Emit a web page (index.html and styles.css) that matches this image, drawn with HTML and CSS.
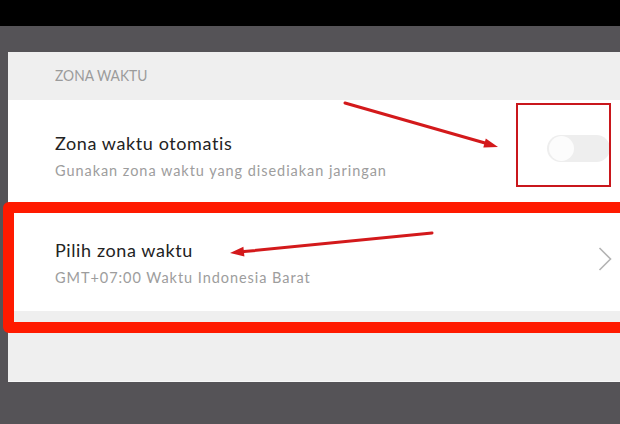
FILE: index.html
```html
<!DOCTYPE html>
<html lang="id">
<head>
<meta charset="utf-8">
<title>Zona waktu</title>
<link rel="stylesheet" href="styles.css">
</head>
<body>
<div class="topbar"></div>
<div class="stage">
  <div class="panel">
    <div class="section-head"><span>ZONA WAKTU</span></div>
    <div class="row row-auto">
      <div class="texts">
        <div class="title">Zona waktu otomatis</div>
        <div class="sub">Gunakan zona waktu yang disediakan jaringan</div>
      </div>
      <div class="toggle"><div class="knob"></div></div>
    </div>
    <div class="row row-pick">
      <div class="texts">
        <div class="title">Pilih zona waktu</div>
        <div class="sub">GMT+07:00 Waktu Indonesia Barat</div>
      </div>
      <svg class="chev" width="14" height="24" viewBox="0 0 14 24"><polyline points="1.5,1 12.5,12 1.5,23" fill="none" stroke="#b3b3b3" stroke-width="1.6"/></svg>
    </div>
  </div>
</div>
<div class="mark-big"></div>
<div class="mark-small"></div>
<svg class="arrows" width="620" height="424" viewBox="0 0 620 424">
  <line x1="345" y1="103" x2="485" y2="143" stroke="#d3191b" stroke-width="3" stroke-linecap="round"/>
  <polygon points="498,147 483.3,147.6 485.8,138.6" fill="#d3191b"/>
  <line x1="432" y1="233" x2="244" y2="251.6" stroke="#d3191b" stroke-width="3" stroke-linecap="round"/>
  <polygon points="230,253 243.4,246.8 244.4,256.4" fill="#d3191b"/>
</svg>
</body>
</html>
```

FILE: styles.css
```css
html, body {
  margin: 0;
  padding: 0;
}
body {
  width: 620px;
  height: 424px;
  overflow: hidden;
  background: #555357;
  font-family: Lato, "Open Sans", sans-serif;
  position: relative;
}
.topbar {
  height: 26px;
  background: #000;
}
.stage {
  padding: 26px 0 0 8px;
}
.panel {
  height: 329px;
  background: #efefef;
  border-bottom: 1px solid #f7f7f7;
  display: flex;
  flex-direction: column;
}
.section-head {
  height: 48px;
  padding-left: 47px;
  box-sizing: border-box;
  padding-top: 13px;
}
.section-head span {
  display: inline-block;
  font-family: "Liberation Sans Narrow", Lato, sans-serif;
  font-size: 15px;
  line-height: 18px;
  color: #9b9b9b;
  transform: scaleX(0.92);
  transform-origin: left center;
}
.row {
  background: #fff;
  display: flex;
  justify-content: space-between;
  box-sizing: border-box;
  padding-left: 47px;
}
.row-auto {
  height: 102px;
  padding-top: 33px;
  padding-right: 10px;
}
.row-pick {
  height: 109px;
  padding-top: 38px;
  padding-right: 8px;
}
.title {
  font-size: 18px;
  line-height: 21px;
  color: #232323;
  letter-spacing: 0.6px;
}
.sub {
  margin-top: 8px;
  font-size: 14.5px;
  line-height: 18px;
  color: #9d9d9d;
  letter-spacing: 0.95px;
}
.toggle {
  width: 63px;
  height: 27px;
  border-radius: 14px;
  background: #eeeeee;
  margin-top: 2px;
  padding: 1px 2px;
  box-sizing: border-box;
}
.knob {
  width: 25px;
  height: 25px;
  border-radius: 50%;
  background: #fcfcfc;
}
.chev {
  margin-top: 7px;
}
.mark-big {
  position: absolute;
  left: 3px;
  top: 202px;
  width: 640px;
  height: 131px;
  box-sizing: border-box;
  border: 11px solid #ff1a00;
  border-radius: 6px;
}
.mark-small {
  position: absolute;
  left: 516px;
  top: 103px;
  width: 95px;
  height: 84px;
  box-sizing: border-box;
  border: 2px solid #c9171c;
}
.arrows {
  position: absolute;
  left: 0;
  top: 0;
}
```
